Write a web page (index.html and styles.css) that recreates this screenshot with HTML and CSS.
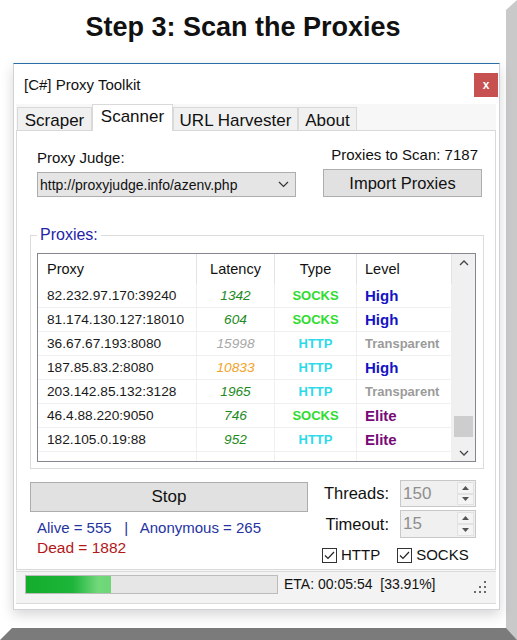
FILE: index.html
```html
<!DOCTYPE html>
<html lang="en">
<head>
<meta charset="utf-8">
<title>Step 3: Scan the Proxies</title>
<link rel="stylesheet" href="styles.css">
</head>
<body>
<div class="frame">
  <h1 class="title">Step 3: Scan the Proxies</h1>
  <div class="window">
    <div class="titlebar">
      <span class="win-title">[C#] Proxy Toolkit</span>
      <span class="close">x</span>
    </div>
    <div class="client">
      <div class="tabs">
        <div class="tab tab-scraper">Scraper</div>
        <div class="tab tab-scanner active">Scanner</div>
        <div class="tab tab-harvester">URL Harvester</div>
        <div class="tab tab-about">About</div>
      </div>
      <div class="panel">
        <div class="top-row">
          <div class="judge">
            <div class="judge-label">Proxy Judge:</div>
            <div class="select">
              <span>http://proxyjudge.info/azenv.php</span>
              <svg class="chev" width="11" height="7" viewBox="0 0 11 7"><polyline points="1,1 5.5,5.5 10,1" fill="none" stroke="#333" stroke-width="1.2"/></svg>
            </div>
          </div>
          <div class="import">
            <div class="scan-count">Proxies to Scan: 7187</div>
            <div class="btn import-btn">Import Proxies</div>
          </div>
        </div>

        <fieldset class="group">
          <legend>Proxies:</legend>
          <div class="list">
            <div class="table">
              <div class="row head">
                <div class="c c-proxy">Proxy</div>
                <div class="c c-lat">Latency</div>
                <div class="c c-type">Type</div>
                <div class="c c-level">Level</div>
              </div>
              <div class="row">
                <div class="c c-proxy">82.232.97.170:39240</div>
                <div class="c c-lat lat-ok">1342</div>
                <div class="c c-type socks">SOCKS</div>
                <div class="c c-level high">High</div>
              </div>
              <div class="row">
                <div class="c c-proxy">81.174.130.127:18010</div>
                <div class="c c-lat lat-ok">604</div>
                <div class="c c-type socks">SOCKS</div>
                <div class="c c-level high">High</div>
              </div>
              <div class="row">
                <div class="c c-proxy">36.67.67.193:8080</div>
                <div class="c c-lat lat-slow">15998</div>
                <div class="c c-type http">HTTP</div>
                <div class="c c-level transparent">Transparent</div>
              </div>
              <div class="row">
                <div class="c c-proxy">187.85.83.2:8080</div>
                <div class="c c-lat lat-warn">10833</div>
                <div class="c c-type http">HTTP</div>
                <div class="c c-level high">High</div>
              </div>
              <div class="row">
                <div class="c c-proxy">203.142.85.132:3128</div>
                <div class="c c-lat lat-ok">1965</div>
                <div class="c c-type http">HTTP</div>
                <div class="c c-level transparent">Transparent</div>
              </div>
              <div class="row">
                <div class="c c-proxy">46.4.88.220:9050</div>
                <div class="c c-lat lat-ok">746</div>
                <div class="c c-type socks">SOCKS</div>
                <div class="c c-level elite">Elite</div>
              </div>
              <div class="row">
                <div class="c c-proxy">182.105.0.19:88</div>
                <div class="c c-lat lat-ok">952</div>
                <div class="c c-type http">HTTP</div>
                <div class="c c-level elite">Elite</div>
              </div>
              <div class="row">
                <div class="c c-proxy"></div>
                <div class="c c-lat"></div>
                <div class="c c-type"></div>
                <div class="c c-level"></div>
              </div>
            </div>
            <div class="scrollbar">
              <div class="sb-btn">
                <svg width="10" height="6" viewBox="0 0 10 6"><polyline points="1,5 5,1 9,5" fill="none" stroke="#444" stroke-width="1.3"/></svg>
              </div>
              <div class="sb-track"><div class="sb-thumb"></div></div>
              <div class="sb-btn">
                <svg width="10" height="6" viewBox="0 0 10 6"><polyline points="1,1 5,5 9,1" fill="none" stroke="#444" stroke-width="1.3"/></svg>
              </div>
            </div>
          </div>
        </fieldset>

        <div class="bottom">
          <div class="actions">
            <div class="btn stop-btn">Stop</div>
            <div class="stats">
              <div class="alive">Alive = 555   |   Anonymous = 265</div>
              <div class="dead">Dead = 1882</div>
            </div>
          </div>
          <div class="settings">
            <div class="field">
              <span class="field-label">Threads:</span>
              <div class="spin">
                <span class="spin-value">150</span>
                <div class="spin-btns">
                  <span class="spin-btn"><svg width="7" height="4" viewBox="0 0 7 4"><polygon points="0,4 3.5,0 7,4" fill="#555"/></svg></span>
                  <span class="spin-btn"><svg width="7" height="4" viewBox="0 0 7 4"><polygon points="0,0 3.5,4 7,0" fill="#555"/></svg></span>
                </div>
              </div>
            </div>
            <div class="field field-timeout">
              <span class="field-label">Timeout:</span>
              <div class="spin spin-tall">
                <span class="spin-value">15</span>
                <div class="spin-btns">
                  <span class="spin-btn"><svg width="7" height="4" viewBox="0 0 7 4"><polygon points="0,4 3.5,0 7,4" fill="#555"/></svg></span>
                  <span class="spin-btn"><svg width="7" height="4" viewBox="0 0 7 4"><polygon points="0,0 3.5,4 7,0" fill="#555"/></svg></span>
                </div>
              </div>
            </div>
            <div class="checks">
              <label class="check">
                <span class="box"><svg width="11" height="9" viewBox="0 0 11 9"><polyline points="1,4.5 4,7.5 10,1" fill="none" stroke="#222" stroke-width="1.2"/></svg></span>
                <span>HTTP</span>
              </label>
              <label class="check">
                <span class="box"><svg width="11" height="9" viewBox="0 0 11 9"><polyline points="1,4.5 4,7.5 10,1" fill="none" stroke="#222" stroke-width="1.2"/></svg></span>
                <span>SOCKS</span>
              </label>
            </div>
          </div>
        </div>
      </div>
      <div class="status">
        <div class="progress"><div class="progress-fill" style="width: 33.91%"></div></div>
        <span class="eta">ETA: 00:05:54  [33.91%]</span>
        <svg class="grip" width="13" height="13" viewBox="0 0 13 13">
          <rect x="10" y="0" width="2" height="2" fill="#6a6a6a"/>
          <rect x="5" y="5" width="2" height="2" fill="#6a6a6a"/>
          <rect x="10" y="5" width="2" height="2" fill="#6a6a6a"/>
          <rect x="0" y="10" width="2" height="2" fill="#6a6a6a"/>
          <rect x="5" y="10" width="2" height="2" fill="#6a6a6a"/>
          <rect x="10" y="10" width="2" height="2" fill="#6a6a6a"/>
        </svg>
      </div>
    </div>
  </div>
</div>
</body>
</html>
```

FILE: styles.css
```css
html, body {
  margin: 0;
  padding: 0;
  background: #ffffff;
}

.frame {
  box-sizing: border-box;
  width: 517px;
  height: 640px;
  border-style: solid;
  border-width: 10px 11px 12px 12px;
  border-color: #ffffff #c9c9c9 #7b7b7b #ffffff;
  font-family: "Liberation Sans", Arial, sans-serif;
  color: #111;
  background: #ffffff;
}

.title {
  margin: 0;
  padding-right: 32px;
  font: bold 27px/34px "Liberation Sans", Arial, sans-serif;
  text-align: center;
  color: #111;
}

.window {
  box-sizing: border-box;
  width: 487px;
  height: 547px;
  margin: 19px 0 0 1px;
  border: 1px solid #cfd2d6;
  border-top-color: #2b6ea6;
  background: #ffffff;
  display: flex;
  flex-direction: column;
  box-shadow: 0 5px 12px rgba(0, 0, 0, 0.16);
}

.titlebar {
  height: 40px;
  display: flex;
  align-items: center;
  justify-content: space-between;
  padding-left: 10px;
}

.win-title {
  font-size: 15px;
  color: #111;
}

.close {
  width: 24px;
  height: 24px;
  margin: 2px 1px 0 0;
  background: #c75050;
  color: #fff;
  font-weight: bold;
  font-size: 12px;
  display: flex;
  align-items: center;
  justify-content: center;
}

.client {
  flex: 1;
  margin: 0 3px 5px 2px;
  display: flex;
  flex-direction: column;
  background: #f7f7f7;
}

.tabs {
  display: flex;
  align-items: flex-end;
  height: 27px;
  padding-left: 1px;
  margin-bottom: -1px;
}

.tab {
  box-sizing: border-box;
  height: 24px;
  border: 1px solid #d9d9d9;
  border-bottom: none;
  background: #f0f0f0;
  font-size: 17px;
  line-height: 20px;
  padding-top: 3px;
  text-align: center;
  white-space: nowrap;
}

.tab.active {
  height: 27px;
  background: #ffffff;
  padding-top: 2px;
  position: relative;
  z-index: 1;
}

.tab-scraper { width: 75px; }
.tab-scanner { width: 81px; }
.tab-harvester { width: 125px; }
.tab-about { width: 59px; }

.panel {
  flex: 1;
  border: 1px solid #d9d9d9;
  background: #ffffff;
}

.top-row {
  display: flex;
  justify-content: space-between;
  align-items: flex-end;
  margin: 14px 13px 0 20px;
}

.judge-label {
  font-size: 15px;
  line-height: 20px;
  margin-bottom: 4px;
}

.select {
  box-sizing: border-box;
  width: 259px;
  height: 25px;
  border: 1px solid #adadad;
  background: #e5e5e5;
  display: flex;
  align-items: center;
  justify-content: space-between;
  padding: 0 6px 0 2px;
  font-size: 14px;
}

.scan-count {
  font-size: 15px;
  line-height: 20px;
  text-align: right;
  padding-right: 4px;
  margin-bottom: 4px;
}

.btn {
  box-sizing: border-box;
  border: 1px solid #adadad;
  background: #e1e1e1;
  display: flex;
  align-items: center;
  justify-content: center;
  color: #111;
}

.import-btn {
  width: 159px;
  height: 28px;
  font-size: 16.5px;
}

.group {
  margin: 29px 11px 0 13px;
  padding: 9px 7px 6px 6px;
  border: 1px solid #dcdcdc;
  min-width: 0;
}

.group legend {
  padding: 0 3px;
  margin-left: 0;
  font-size: 16px;
  line-height: 18px;
  color: #2424a8;
}

.list {
  box-sizing: border-box;
  height: 209px;
  border: 1px solid #828790;
  background: #ffffff;
  display: flex;
  overflow: hidden;
}

.table {
  width: 414px;
  overflow: hidden;
}

.row {
  display: grid;
  grid-template-columns: 159px 78px 82px 95px;
  height: 24px;
  box-sizing: border-box;
  border-bottom: 1px solid #efefef;
  font-size: 13.7px;
  color: #1a1a1a;
}

.row .c {
  display: flex;
  align-items: center;
  border-right: 1px solid #f0f0f0;
  white-space: nowrap;
  overflow: hidden;
}

.row.head {
  height: 30px;
  border-bottom: none;
  font-size: 14.5px;
  color: #111;
}

.row.head .c {
  border-right-color: #e3e3e3;
}

.c-proxy { padding-left: 9px; }
.c-lat { justify-content: center; }
.c-type { justify-content: center; }
.c-level { padding-left: 8px; }

.lat-ok { font-style: italic; color: #1e8a1e; }
.lat-slow { font-style: italic; color: #a8a8a8; }
.lat-warn { font-style: italic; color: #f0a429; }

.socks { font-weight: bold; font-size: 13px; color: #2fdc2f; }
.http { font-weight: bold; font-size: 13px; color: #2ed9ea; }

.high { font-weight: bold; font-size: 15px; color: #1414c4; }
.elite { font-weight: bold; font-size: 15px; color: #780a78; }
.transparent { font-weight: bold; font-size: 13px; color: #9b9b9b; }

.scrollbar {
  width: 23px;
  background: #f0f0f0;
  display: flex;
  flex-direction: column;
}

.sb-btn {
  height: 17px;
  display: flex;
  align-items: center;
  justify-content: center;
}

.sb-track {
  flex: 1;
  display: flex;
  flex-direction: column;
  align-items: center;
}

.sb-thumb {
  width: 19px;
  height: 21px;
  margin-top: 145px;
  background: #cdcdcd;
}

.bottom {
  display: flex;
  justify-content: space-between;
  align-items: flex-start;
  margin: 11px 19px 0 13px;
}

.actions {
  width: 278px;
}

.stop-btn {
  width: 278px;
  height: 30px;
  margin-top: 2px;
  font-size: 17px;
}

.stats {
  padding-left: 7px;
  margin-top: 6px;
  font-size: 15px;
  line-height: 20px;
}

.alive {
  color: #24339f;
  white-space: pre;
}

.dead {
  color: #b31717;
  font-size: 15.5px;
}

.settings {
  width: 154px;
}

.field {
  display: flex;
  justify-content: flex-end;
  align-items: center;
  gap: 11px;
}

.field-timeout {
  margin-top: 3px;
}

.field-label {
  font-size: 16.5px;
  color: #111;
}

.spin {
  box-sizing: border-box;
  width: 76px;
  height: 27px;
  border: 1px solid #c8c8c8;
  background: #f0f0f0;
  display: flex;
  align-items: center;
  justify-content: space-between;
  padding: 1px 1px 1px 2px;
}

.spin-tall {
  height: 28px;
}

.spin-value {
  font-size: 17px;
  color: #8e8e8e;
}

.spin-btns {
  align-self: stretch;
  width: 17px;
  display: flex;
  flex-direction: column;
}

.spin-btn {
  flex: 1;
  display: flex;
  align-items: center;
  justify-content: center;
  border: 1px solid #e2e2e2;
  background: #f4f4f4;
}

.checks {
  display: flex;
  gap: 17px;
  margin-top: 9px;
}

.check {
  display: flex;
  align-items: center;
  gap: 4px;
  font-size: 15px;
  line-height: 16px;
  color: #111;
}

.box {
  box-sizing: border-box;
  width: 15px;
  height: 15px;
  border: 1px solid #333;
  background: #fff;
  display: flex;
  align-items: center;
  justify-content: center;
}

.status {
  box-sizing: border-box;
  height: 33px;
  margin-top: 1px;
  border-top: 1px solid #dadada;
  border-bottom: 1px solid #dadada;
  background: #f3f3f3;
  display: flex;
  align-items: flex-start;
  padding: 3px 9px 0 9px;
}

.progress {
  box-sizing: border-box;
  width: 253px;
  height: 19px;
  border: 1px solid #bcbcbc;
  background: #e6e6e6;
}

.progress-fill {
  height: 100%;
  background: linear-gradient(to right, #13ad2b 0%, #1db53a 55%, #72d87c 85%, #6dd676 100%);
}

.eta {
  margin-left: 6px;
  font-size: 14px;
  line-height: 19px;
  white-space: pre;
  color: #111;
}

.grip {
  margin-left: auto;
  margin-top: 6px;
}
```
